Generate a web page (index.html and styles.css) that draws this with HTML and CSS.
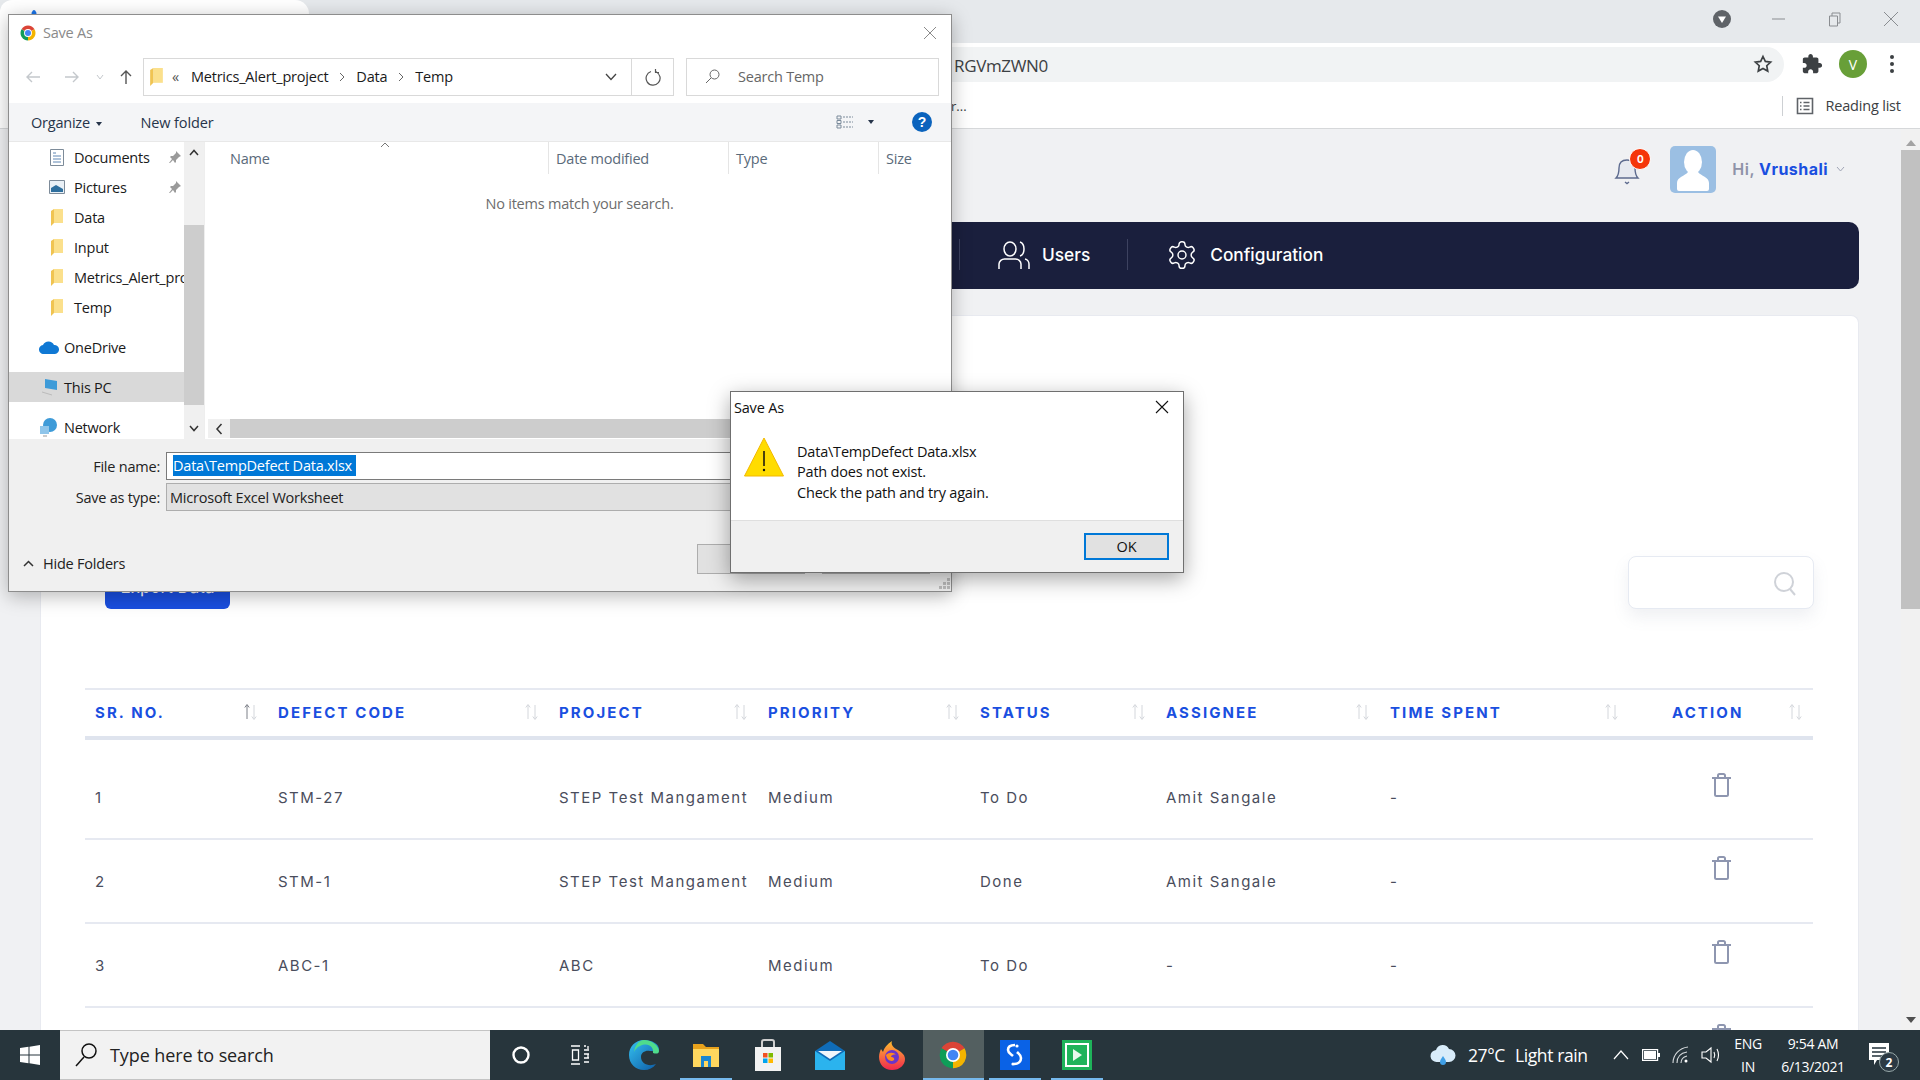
FILE: index.html
```html
<!DOCTYPE html>
<html lang="en">
<head>
<meta charset="utf-8">
<title>Defects - Save As</title>
<link rel="stylesheet" href="styles.css">
</head>
<body>
<svg class="defs" width="0" height="0" aria-hidden="true">
  <defs>
    <symbol id="chrome" viewBox="0 0 48 48">
      <path fill="#db4437" d="M24 24 6.700 14A20 20 0 0 1 41.300 14Z"/>
      <path fill="#f4b400" d="M24 24 41.300 14A20 20 0 0 1 24 44Z"/>
      <path fill="#0f9d58" d="M24 24V44A20 20 0 0 1 6.700 14Z"/>
      <circle cx="24" cy="24" r="10.500" fill="#fff"/>
      <circle cx="24" cy="24" r="8" fill="#4285f4"/>
    </symbol>
    <symbol id="folder" viewBox="0 0 12 17">
      <path fill="#fbe08c" d="M3 0h9v14H3Z"/>
      <path fill="#f0c452" d="M0 2 3 0v14l-3 3Z"/>
    </symbol>
    <symbol id="trash" viewBox="0 0 21 24">
      <path fill="none" stroke="#8e96b0" stroke-width="2" d="M1 5h19M4 5v16.500a1.500 1.500 0 0 0 1.500 1.500h10a1.500 1.500 0 0 0 1.500-1.500V5M7 5V2.500A1.500 1.500 0 0 1 8.500 1h4A1.500 1.500 0 0 1 14 2.500V5"/>
    </symbol>
    <symbol id="sort" viewBox="0 0 16 18">
      <path fill="none" stroke="#d4d7dc" stroke-width="1" d="M4 16V2M1.800 4.500 4 1.500 6.200 4.500M11 2v14M8.800 13.500 11 16.500 13.200 13.500"/>
    </symbol>
    <symbol id="sort-first" viewBox="0 0 16 18">
      <path fill="none" stroke="#7d8088" stroke-width="1" d="M4 16V2M1.800 4.500 4 1.500 6.200 4.500"/>
      <path fill="none" stroke="#d4d7dc" stroke-width="1" d="M11 2v14M8.800 13.500 11 16.500 13.200 13.500"/>
    </symbol>
  </defs>
</svg>

<div class="screen">
  <div class="browser">
    <div class="tabstrip">
      <div class="tab"><span class="tab-mark"></span></div>
      <div class="win-controls">
        <svg class="ctl-profile" width="18" height="18" viewBox="0 0 18 18"><circle cx="9" cy="9" r="9" fill="#5f6368"/><path d="M5 6.500h8L9 13Z" fill="#fff"/></svg>
        <svg class="ctl" width="16" height="16" viewBox="0 0 16 16"><path d="M1 8h13" stroke="#8a8d91" fill="none"/></svg>
        <svg class="ctl" width="16" height="16" viewBox="0 0 16 16"><path d="M2.500 5h8v10h-8ZM5 5V2h8v10h-2.500" stroke="#8a8d91" fill="none"/></svg>
        <svg class="ctl" width="16" height="16" viewBox="0 0 16 16"><path d="M1 1l14 14M15 1 1 15" stroke="#8a8d91" fill="none"/></svg>
      </div>
    </div>
    <div class="toolbar">
      <div class="omnibox">
        <span class="url">RGVmZWN0</span>
        <svg class="star" width="20" height="20" viewBox="0 0 24 24"><path fill="none" stroke="#3c4043" stroke-width="2" d="m12 3 2.800 5.900 6.400.8-4.700 4.400 1.200 6.400L12 17.400l-5.700 3.100 1.200-6.400-4.700-4.400 6.400-.8Z"/></svg>
      </div>
      <svg class="puzzle" width="22" height="22" viewBox="0 0 24 24"><path fill="#3c4043" d="M20.500 11H19V7c0-1.100-.9-2-2-2h-4V3.500C13 2.120 11.880 1 10.500 1S8 2.120 8 3.500V5H4c-1.100 0-1.990.9-1.990 2v3.800H3.500c1.490 0 2.700 1.210 2.700 2.700s-1.210 2.700-2.700 2.700H2V20c0 1.100.9 2 2 2h3.800v-1.500c0-1.490 1.210-2.700 2.700-2.700 1.490 0 2.700 1.210 2.700 2.700V22H17c1.100 0 2-.9 2-2v-4h1.500c1.380 0 2.500-1.120 2.500-2.500S21.880 11 20.500 11z"/></svg>
      <span class="account">V</span>
      <span class="kebab"><i></i><i></i><i></i></span>
    </div>
    <div class="bookmarks">
      <span class="bm-cut">r...</span>
      <span class="bm-sep"></span>
      <svg class="bm-icon" width="18" height="18" viewBox="0 0 18 18"><path fill="none" stroke="#5f6368" stroke-width="1.600" d="M1.500 1.500h15v15h-15ZM7.500 5.500h6M7.500 9h6M7.500 12.500h6M4 5.500h1.500M4 9h1.500M4 12.500h1.500"/></svg>
      <span class="bm-text">Reading list</span>
    </div>
    <div class="viewport">
      <main class="page">
        <header class="topbar">
          <div class="bell">
            <svg width="26" height="30" viewBox="0 0 26 30"><path fill="#e6e9f0" stroke="#5d6b8f" stroke-width="1.400" d="M2 23c3-3 3-6 3-10 0-5 3-8 8-8s8 3 8 8c0 4 0 7 3 10Z"/><path fill="none" stroke="#5d6b8f" stroke-width="1.400" d="M11 27l2 1.500 2-1.500"/></svg>
            <span class="badge">0</span>
          </div>
          <div class="avatar">
            <svg width="36" height="42" viewBox="0 0 36 42"><ellipse cx="18" cy="13" rx="9" ry="12" fill="#fff"/><path fill="#fff" d="M2 40v-6c0-6 8-7 11-11h10c3 4 11 5 11 11v6a2 2 0 0 1-2 2H4a2 2 0 0 1-2-2Z"/></svg>
          </div>
          <span class="hi">Hi, <b>Vrushali</b></span>
          <svg class="hi-caret" width="9" height="6" viewBox="0 0 9 6"><path d="m1 1 3.500 4L8 1" fill="none" stroke="#a0a5b5"/></svg>
        </header>
        <nav class="mainnav">
          <span class="nav-sep first"></span>
          <a class="nav-item">
            <svg width="32" height="30" viewBox="0 0 32 30"><g fill="none" stroke="#fff" stroke-width="1.500"><ellipse cx="12" cy="9" rx="6" ry="7"/><path d="M1 29v-5c0-3 3-5 5.500-5h11c2.500 0 5.500 2 5.500 5v5M22 2c3 1 4 4 4 7s-1 6-4 7M27 19c2.500.5 4 3 4 5v5"/></g></svg>
            Users
          </a>
          <span class="nav-sep"></span>
          <a class="nav-item">
            <svg width="32" height="32" viewBox="0 0 24 24"><g fill="none" stroke="#fff" stroke-width="1.100"><path d="M12.220 2h-.44a2 2 0 0 0-2 2v.18a2 2 0 0 1-1 1.730l-.43.25a2 2 0 0 1-2 0l-.15-.08a2 2 0 0 0-2.730.73l-.22.38a2 2 0 0 0 .73 2.730l.15.1a2 2 0 0 1 1 1.720v.51a2 2 0 0 1-1 1.740l-.15.09a2 2 0 0 0-.73 2.730l.22.38a2 2 0 0 0 2.730.73l.15-.08a2 2 0 0 1 2 0l.43.25a2 2 0 0 1 1 1.730V20a2 2 0 0 0 2 2h.44a2 2 0 0 0 2-2v-.18a2 2 0 0 1 1-1.730l.43-.25a2 2 0 0 1 2 0l.15.08a2 2 0 0 0 2.730-.73l.22-.39a2 2 0 0 0-.73-2.730l-.15-.08a2 2 0 0 1-1-1.740v-.5a2 2 0 0 1 1-1.740l.15-.09a2 2 0 0 0 .73-2.730l-.22-.38a2 2 0 0 0-2.730-.73l-.15.08a2 2 0 0 1-2 0l-.43-.25a2 2 0 0 1-1-1.730V4a2 2 0 0 0-2-2z"/><circle cx="12" cy="12" r="3"/></g></svg>
            Configuration
          </a>
        </nav>
        <section class="card">
          <div class="card-actions">
            <button class="export">Export Data</button>
            <div class="searchbox">
              <svg width="24" height="26" viewBox="0 0 24 26"><g fill="none" stroke="#cfd2d8" stroke-width="2"><circle cx="11" cy="12" r="9"/><path d="m17 19 5 6"/></g></svg>
            </div>
          </div>
          <table class="grid">
            <colgroup><col class="c1"><col class="c2"><col class="c3"><col class="c4"><col class="c5"><col class="c6"><col class="c7"><col class="c8"></colgroup>
            <thead>
              <tr>
                <th><div class="th"><span>SR. NO.</span><svg width="16" height="18"><use href="#sort-first"/></svg></div></th>
                <th><div class="th"><span>DEFECT CODE</span><svg width="16" height="18"><use href="#sort"/></svg></div></th>
                <th><div class="th"><span>PROJECT</span><svg width="16" height="18"><use href="#sort"/></svg></div></th>
                <th><div class="th"><span>PRIORITY</span><svg width="16" height="18"><use href="#sort"/></svg></div></th>
                <th><div class="th"><span>STATUS</span><svg width="16" height="18"><use href="#sort"/></svg></div></th>
                <th><div class="th"><span>ASSIGNEE</span><svg width="16" height="18"><use href="#sort"/></svg></div></th>
                <th><div class="th"><span>TIME SPENT</span><svg width="16" height="18"><use href="#sort"/></svg></div></th>
                <th class="act-h"><div class="th"><span>ACTION</span><svg width="16" height="18"><use href="#sort"/></svg></div></th>
              </tr>
            </thead>
            <tbody>
              <tr><td>1</td><td>STM-27</td><td>STEP Test Mangament</td><td>Medium</td><td>To Do</td><td>Amit Sangale</td><td>-</td><td class="act"><svg width="21" height="24"><use href="#trash"/></svg></td></tr>
              <tr><td>2</td><td>STM-1</td><td>STEP Test Mangament</td><td>Medium</td><td>Done</td><td>Amit Sangale</td><td>-</td><td class="act"><svg width="21" height="24"><use href="#trash"/></svg></td></tr>
              <tr><td>3</td><td>ABC-1</td><td>ABC</td><td>Medium</td><td>To Do</td><td>-</td><td>-</td><td class="act"><svg width="21" height="24"><use href="#trash"/></svg></td></tr>
              <tr><td></td><td></td><td></td><td></td><td></td><td></td><td></td><td class="act"><svg width="21" height="24"><use href="#trash"/></svg></td></tr>
            </tbody>
          </table>
        </section>
      </main>
      <div class="vscroll">
        <span class="arrow up"></span>
        <span class="vthumb"></span>
        <span class="vspace"></span>
        <span class="arrow down"></span>
      </div>
    </div>
  </div>

  <footer class="taskbar">
    <div class="start">
      <svg width="20" height="20" viewBox="0 0 20 20"><path fill="#fff" d="M0 3 8.500 1.800v7.700H0ZM9.500 1.700 20 0v9.500H9.500ZM0 10.500h8.500v7.700L0 17ZM9.500 10.500H20V20L9.500 18.300Z"/></svg>
    </div>
    <div class="tb-search">
      <svg width="24" height="26" viewBox="0 0 24 26"><g fill="none" stroke="#111" stroke-width="1.500"><circle cx="15" cy="9" r="7"/><path d="M10 15 2 24"/></g></svg>
      <span>Type here to search</span>
    </div>
    <div class="tb-apps">
      <span class="app"><svg width="18" height="18" viewBox="0 0 18 18"><circle cx="9" cy="9" r="7.500" fill="none" stroke="#fff" stroke-width="2.400"/></svg></span>
      <span class="app"><svg class="taskview" width="20" height="20" viewBox="0 0 20 20"><path fill="none" stroke="#fff" stroke-width="1.300" d="M1 1h9M1 19h9M2.500 5h6v10h-6ZM14 1h2M14 5h5M14 9h5M14 13h5M14 17h5M18 1v3M18 9v4"/></svg></span>
      <span class="app"><svg width="32" height="32" viewBox="0 0 32 32"><defs><linearGradient id="eg" x1="0" y1="0" x2="1" y2="1"><stop offset="0" stop-color="#35c1f1"/><stop offset="1" stop-color="#0c59a4"/></linearGradient></defs><path fill="url(#eg)" d="M16 1C7 1 1 8 1 16c0 9 7 15 15 15 5 0 9-2 12-6-7 3-15 0-15-7 0-5 5-7 9-6 4 0 9 2 9-2C31 5 24 1 16 1Z"/><path fill="#4fdc8c" d="M16 1c8 0 15 6 15 11 0 3-3 3-6 2 1-6-5-11-13-7-3 1-5 4-6 6C7 6 11 1 16 1Z"/></svg></span>
      <span class="app on"><svg width="28" height="28" viewBox="0 0 28 28"><path fill="#e8a21c" d="M1 3h10l3 3h13v5H1Z"/><path fill="#ffd75e" d="M1 8h26v18H1Z"/><path fill="#1a86d0" d="M9 15h10v11h-3v-6h-4v6H9Z"/></svg></span>
      <span class="app"><svg width="30" height="32" viewBox="0 0 30 32"><path fill="none" stroke="#cfcfcf" stroke-width="2" d="M9 9V3a2 2 0 0 1 2-2h8a2 2 0 0 1 2 2v6"/><path fill="#f2f2f2" d="M2 8h26v24H2Z"/><path fill="#f25022" d="M10 14h4.500v4.500H10Z"/><path fill="#7fba00" d="M15.500 14H20v4.500h-4.500Z"/><path fill="#00a4ef" d="M10 19.500h4.500V24H10Z"/><path fill="#ffb900" d="M15.500 19.500H20V24h-4.500Z"/></svg></span>
      <span class="app"><svg width="30" height="30" viewBox="0 0 30 30"><path fill="#0f6cb8" d="M15 1 30 11v19H0V11Z"/><path fill="#2bb3ee" d="M0 11l15 10 15-10v19H0Z"/><path fill="#f0f6fb" d="M3 11h24L15 19Z"/></svg></span>
      <span class="app"><svg width="28" height="30" viewBox="0 0 28 30"><defs><linearGradient id="fg" x1="0" y1="0" x2="0" y2="1"><stop offset="0" stop-color="#ffbd2e"/><stop offset="1" stop-color="#f1274e"/></linearGradient></defs><path fill="url(#fg)" d="M14 30C6 30 1 24 1 17c0-3 1-6 2-8l2 3c1-4 4-8 9-11-1 3 0 5 4 8 4 2 9 5 9 10 0 6-5 11-13 11Z"/><circle cx="14" cy="17" r="7" fill="#6b35c9"/><path fill="#ff8a1e" d="M8 15c3-3 8-3 10 0-2-1-5 0-5 2 2 0 4 1 3 3-2 2-7 1-8-5Z"/></svg></span>
      <span class="app on active"><svg width="32" height="32"><use href="#chrome"/></svg></span>
      <span class="app on"><svg width="30" height="30" viewBox="0 0 30 30"><path fill="#0a62e6" d="M0 0h30v30H0Z"/><path fill="none" stroke="#fff" stroke-width="2.600" d="M15 5c-5 0-7 2-7 5 0 3 3 4 5 6M17 12c2 2 4 3 4 6s-2 6-7 6"/><circle cx="13" cy="24" r="1.600" fill="#fff"/><circle cx="17" cy="6" r="1.600" fill="#fff"/></svg></span>
      <span class="app on"><svg width="30" height="30" viewBox="0 0 30 30"><path fill="#1eb35a" d="M0 0h30v30H0Z"/><path fill="#fff" d="M3 3h24v24H3Z"/><path fill="#1eb35a" d="M5 5h20v20H5Z"/><path fill="#e8f8ee" d="M11 9l9 6-9 6Z"/></svg></span>
    </div>
    <div class="tray">
      <svg class="t-weather" width="26" height="26" viewBox="0 0 26 26"><path fill="#d8ecfa" d="M7 20a6 6 0 0 1-1-12 7 7 0 0 1 13-1 6.500 6.500 0 0 1 0 13Z"/><path fill="#3f9fe6" d="M13 14c2 3 3 4 3 6a3 3 0 0 1-6 0c0-2 1-3 3-6Z"/></svg>
      <span class="t-temp">27°C</span>
      <span class="t-cond">Light rain</span>
      <span class="t-ico"><svg width="16" height="10" viewBox="0 0 16 10"><path fill="none" stroke="#fff" stroke-width="1.200" d="m1 9 7-8 7 8"/></svg></span>
      <span class="t-ico"><svg width="18" height="12" viewBox="0 0 18 12"><path fill="none" stroke="#fff" stroke-width="1.200" d="M.6.600h15v10.800H.6Z"/><path fill="#fff" d="M2 2h12v8H2ZM16 4h2v4h-2Z"/></svg></span>
      <span class="t-ico"><svg width="18" height="18" viewBox="0 0 18 18"><path fill="none" stroke="#d5d9dc" stroke-width="1.100" d="M1 17C1 9 7 2 16 1M5 17c0-6 4-10 10-11M9 17c0-4 2-6 6-7"/><circle cx="14" cy="15" r="1.500" fill="#fff"/></svg></span>
      <span class="t-ico"><svg width="20" height="18" viewBox="0 0 20 18"><path fill="none" stroke="#fff" stroke-width="1.100" d="M1 6h4l5-4v14l-5-4H1ZM13 6c1 2 1 4 0 6M16 3c2 4 2 8 0 12"/></svg></span>
      <span class="t-lang"><span>ENG</span><span>IN</span></span>
      <span class="t-clock"><span>9:54 AM</span><span>6/13/2021</span></span>
      <span class="t-note">
        <svg width="20" height="26" viewBox="0 0 20 26"><path fill="#fff" d="M0 1h20v17H8l-3 5v-5H0Z"/><path stroke="#22303a" stroke-width="1.300" d="M3 6h14M3 10h14M3 14h10"/></svg>
        <span class="t-count">2</span>
      </span>
    </div>
  </footer>

  <section class="dlg-save">
    <div class="dlg-title">
      <svg width="18" height="18"><use href="#chrome"/></svg>
      <span>Save As</span>
      <svg class="dlg-x" width="14" height="14" viewBox="0 0 14 14"><path d="M1 1l12 12M13 1 1 13" stroke="#8a8a8a" fill="none"/></svg>
    </div>
    <div class="dlg-nav">
      <svg class="n-ico" width="16" height="14" viewBox="0 0 16 14"><path d="M15 7H2M7 2 2 7l5 5" fill="none" stroke="#c4c8cc" stroke-width="1.400"/></svg>
      <svg class="n-ico fwd" width="16" height="14" viewBox="0 0 16 14"><path d="M1 7h13M9 2l5 5-5 5" fill="none" stroke="#c4c8cc" stroke-width="1.400"/></svg>
      <svg class="n-ico dn" width="8" height="6" viewBox="0 0 8 6"><path d="m1 1 3 4 3-4" fill="none" stroke="#c4c8cc"/></svg>
      <svg class="n-ico up" width="14" height="16" viewBox="0 0 14 16"><path d="M7 15V2M2 7l5-5 5 5" fill="none" stroke="#555" stroke-width="1.400"/></svg>
      <div class="addr">
        <svg width="13" height="18"><use href="#folder"/></svg>
        <span class="a-up">«</span>
        <span>Metrics_Alert_project</span><svg class="crumb" width="6" height="10" viewBox="0 0 6 10"><path d="m1 1 4 4-4 4" fill="none" stroke="#666"/></svg>
        <span>Data</span><svg class="crumb" width="6" height="10" viewBox="0 0 6 10"><path d="m1 1 4 4-4 4" fill="none" stroke="#666"/></svg>
        <span>Temp</span>
        <svg class="a-dd" width="12" height="8" viewBox="0 0 12 8"><path d="m1 1 5 5.500L11 1" fill="none" stroke="#444" stroke-width="1.300"/></svg>
        <span class="a-ref"><svg width="16" height="18" viewBox="0 0 16 18"><path d="M6 3.500A7 7 0 1 0 11 3.800M10.500 1v3.500H14" fill="none" stroke="#555" stroke-width="1.200"/></svg></span>
      </div>
      <div class="dsearch">
        <svg width="15" height="15" viewBox="0 0 15 15"><circle cx="9.500" cy="5.500" r="4.500" fill="none" stroke="#666"/><path d="M6 9l-5 5" stroke="#666" fill="none"/></svg>
        <span>Search Temp</span>
      </div>
    </div>
    <div class="dlg-tools">
      <span class="tool">Organize <i class="caret"></i></span>
      <span class="tool nf">New folder</span>
      <svg class="views" width="18" height="14" viewBox="0 0 18 14"><path d="M1 1h4v3H1ZM1 5.500h4v3H1ZM1 10h4v3H1Z" fill="none" stroke="#7a8a9a"/><path d="M7 2h10M7 7h10M7 12h10" stroke="#7a8a9a" stroke-dasharray="2 1" fill="none"/></svg>
      <i class="caret views-c"></i>
      <span class="help">?</span>
    </div>
    <div class="dlg-body">
      <div class="tree">
        <div class="t-item q"><svg width="14" height="17" viewBox="0 0 14 17"><path d="M.5.500h13v16H.5Z" fill="#fff" stroke="#7d8b99"/><path d="M3 4h3M3 7h8M3 10h8M3 13h8" stroke="#5f86b3"/></svg><span>Documents</span><svg class="pin" width="12" height="13" viewBox="0 0 12 13"><path fill="#9a9a9a" d="M7 0l5 5-2 1-3 3 0 2-1 1-2-3-3 3-1 0 3-4-2-2 1-1 2 0 3-3Z"/></svg></div>
        <div class="t-item q"><svg width="16" height="14" viewBox="0 0 16 14"><path d="M.5.500h15v13H.5Z" fill="#e9f0f6" stroke="#7d8b99"/><path d="M2 8l5-3 7 4v3H2Z" fill="#2e6f9e"/></svg><span>Pictures</span><svg class="pin" width="12" height="13" viewBox="0 0 12 13"><path fill="#9a9a9a" d="M7 0l5 5-2 1-3 3 0 2-1 1-2-3-3 3-1 0 3-4-2-2 1-1 2 0 3-3Z"/></svg></div>
        <div class="t-item q"><svg width="14" height="17"><use href="#folder"/></svg><span>Data</span></div>
        <div class="t-item q"><svg width="14" height="17"><use href="#folder"/></svg><span>Input</span></div>
        <div class="t-item q"><svg width="14" height="17"><use href="#folder"/></svg><span>Metrics_Alert_project</span></div>
        <div class="t-item q"><svg width="14" height="17"><use href="#folder"/></svg><span>Temp</span></div>
        <div class="t-item r gap"><svg width="20" height="14" viewBox="0 0 20 14"><path fill="#0f78d4" d="M5 14a4.500 4.500 0 0 1-1-9 6 6 0 0 1 11 0 4.500 4.500 0 0 1 1 9Z"/></svg><span>OneDrive</span></div>
        <div class="t-item r sel gap"><svg width="20" height="18" viewBox="0 0 20 18"><path fill="#3e9bd8" d="M6 1l12 2v9l-12-2Z"/><path d="M3 14l10 3" stroke="#bbb" fill="none"/></svg><span>This PC</span></div>
        <div class="t-item r gap"><svg width="20" height="20" viewBox="0 0 20 20"><circle cx="11" cy="8" r="7" fill="#3e9bd8"/><path d="M1 9h9v8H1Z" fill="#8fc5ea"/><path d="M4 19h4" stroke="#999"/></svg><span>Network</span></div>
      </div>
      <div class="tree-scroll">
        <svg class="ts-a" width="10" height="7" viewBox="0 0 10 7"><path d="m1 6 4-4.500L9 6" fill="none" stroke="#333" stroke-width="1.500"/></svg>
        <span class="ts-thumb"></span>
        <svg class="ts-a" width="10" height="7" viewBox="0 0 10 7"><path d="m1 1 4 4.500L9 1" fill="none" stroke="#333" stroke-width="1.500"/></svg>
      </div>
      <div class="list">
        <div class="l-head">
          <span class="h-name">Name<svg class="h-sort" width="10" height="6" viewBox="0 0 10 6"><path d="m1 5 4-4 4 4" fill="none" stroke="#777"/></svg></span>
          <span>Date modified</span><span>Type</span><span>Size</span>
        </div>
        <div class="l-empty">No items match your search.</div>
        <div class="hscroll">
          <svg width="8" height="12" viewBox="0 0 8 12"><path d="M6.500 1 2 6l4.500 5" fill="none" stroke="#333" stroke-width="1.500"/></svg>
          <span class="hthumb"></span>
        </div>
      </div>
    </div>
    <div class="dlg-panel">
      <div class="f-row">
        <label>File name:</label>
        <div class="f-input"><span class="selected">Data\TempDefect Data.xlsx</span></div>
      </div>
      <div class="f-row tight">
        <label>Save as type:</label>
        <div class="f-select">Microsoft Excel Worksheet</div>
      </div>
      <div class="p-foot">
        <span class="hide"><svg width="11" height="7" viewBox="0 0 11 7"><path d="m1 6 4.500-4.500L10 6" fill="none" stroke="#333" stroke-width="1.500"/></svg>Hide Folders</span>
        <span class="btn">Save</span>
        <span class="btn">Cancel</span>
      </div>
      <svg class="grip" width="12" height="12" viewBox="0 0 12 12"><path fill="#bdbdbd" d="M9 0h3v3H9ZM5 4h3v3H5ZM9 4h3v3H9ZM1 8h3v3H1ZM5 8h3v3H5ZM9 8h3v3H9Z"/></svg>
    </div>
  </section>

  <section class="dlg-alert">
    <div class="al-title">
      <span>Save As</span>
      <svg class="al-x" width="14" height="14" viewBox="0 0 14 14"><path d="M1 1l12 12M13 1 1 13" stroke="#111" fill="none" stroke-width="1.100"/></svg>
    </div>
    <div class="al-body">
      <svg width="40" height="40" viewBox="0 0 40 40"><path fill="#ffdc00" stroke="#f2b800" d="M20 1 39.500 39H.5Z"/><path d="M20 14v15" stroke="#111" stroke-width="1.500"/><circle cx="20" cy="33" r="1.200" fill="#111"/></svg>
      <p>Data\TempDefect Data.xlsx<br>Path does not exist.<br>Check the path and try again.</p>
    </div>
    <div class="al-foot"><span class="ok">OK</span></div>
  </section>
</div>
</body>
</html>
```

FILE: styles.css
```css
* { box-sizing: border-box; }
html, body { margin: 0; padding: 0; height: 100%; overflow: hidden; }
body { font-family: "Liberation Sans", Arial, sans-serif; background: #f0f1f3; }
.defs { position: absolute; }
.screen { position: relative; width: 1920px; height: 1080px; display: flex; flex-direction: column; overflow: hidden; }

/* browser */
.browser { flex: 1; min-height: 0; display: flex; flex-direction: column; }
.tabstrip { height: 43px; background: #e6e9ec; display: flex; flex: none; }
.tab { width: 309px; background: #fff; border-radius: 12px 14px 0 0; position: relative; }
.tab-mark { display: block; width: 6px; height: 16px; margin: 10px 0 0 31px; background: #1a73e8; border-radius: 50%; }
.win-controls { margin-left: auto; display: flex; align-items: center; height: 38px; padding-right: 21px; }
.ctl { margin-left: 40px; }
.toolbar { height: 42px; flex: none; background: #fff; display: flex; align-items: center; }
.omnibox { margin-left: 140px; width: 1644px; height: 35px; background: #f1f3f4; border-radius: 18px; display: flex; align-items: center; padding: 0 11px 0 814px; }
.url { font: 17px "Open Sans", sans-serif; color: #3c4043; letter-spacing: -0.35px; padding-top: 2px; }
.star { margin-left: auto; }
.puzzle { margin-left: 17px; }
.account { width: 28px; height: 28px; margin-left: 16px; border-radius: 50%; background: #689f38; color: #fff; font: 14px "Open Sans", sans-serif; display: flex; align-items: center; justify-content: center; }
.kebab { margin-left: 23px; display: flex; flex-direction: column; gap: 3px; }
.kebab i { display: block; width: 4px; height: 4px; border-radius: 50%; background: #3c4043; }
.bookmarks { height: 44px; flex: none; background: #fff; border-bottom: 1px solid #d6d8da; display: flex; align-items: center; padding: 0 0 2px 951px; }
.bm-cut { font: 13px "Open Sans", sans-serif; color: #3c4043; }
.bm-sep { width: 1px; height: 20px; background: #cdd0d3; margin-left: 815px; }
.bm-icon { margin-left: 13px; }
.bm-text { margin-left: 12px; font: 14.500px "Open Sans", sans-serif; color: #3c4043; letter-spacing: -0.2px; }
.viewport { flex: 1; min-height: 0; display: flex; background: #f0f1f3; }
.page { flex: 1; min-width: 0; padding: 0 42px 0 40px; overflow: hidden; display: flex; flex-direction: column; }
.vscroll { width: 19px; flex: none; background: #f1f1f1; display: flex; flex-direction: column; align-items: center; }
.arrow { flex: none; width: 0; height: 0; border-left: 5px solid transparent; border-right: 5px solid transparent; }
.arrow.up { margin: 11px 0 4px; border-bottom: 6px solid #a3a3a3; }
.arrow.down { margin: 0 0 7px; border-top: 6px solid #505050; }
.vthumb { width: 100%; height: 459px; background: #c1c1c1; flex: none; }
.vspace { flex: 1; }

.topbar { height: 93px; flex: none; display: flex; align-items: flex-start; justify-content: flex-end; padding: 17px 14px 0 0; }
.bell { position: relative; width: 26px; height: 30px; margin: 9px 30px 0 0; }
.badge { position: absolute; top: -7px; right: -11px; width: 22px; height: 22px; border-radius: 50%; background: #f5360a; border: 1px solid #fff; color: #fff; font: bold 10px "Inter", sans-serif; display: flex; align-items: center; justify-content: center; }
.avatar { width: 46px; height: 47px; background: #9bbfe3; border-radius: 5px; display: flex; justify-content: center; align-items: flex-end; padding-bottom: 2px; }
.hi { margin: 13px 0 0 16px; font: 600 16px "Inter", sans-serif; color: #8f93a8; letter-spacing: 0.45px; }
.hi b { font-weight: 700; color: #1a4fe0; }
.hi-caret { margin: 20px 0 0 8px; }

.mainnav { height: 67px; flex: none; background: #1a1f3d; border-radius: 10px; display: flex; align-items: center; color: #fff; padding-bottom: 2px; }
.nav-sep { width: 1px; height: 31px; background: #3d4260; flex: none; }
.nav-sep.first { margin-left: 919px; }
.nav-item { display: flex; align-items: center; gap: 12px; padding: 0 37px 0 38px; font: 500 17.300px "Inter", sans-serif; color: #fff; }

.card { flex: 1; margin-top: 26px; min-height: 0; background: #fff; border: 1px solid #e8eaf0; border-bottom: 0; border-radius: 8px 8px 0 0; padding: 0 44px; overflow: hidden; }
.card-actions { height: 293px; display: flex; align-items: flex-end; justify-content: space-between; padding: 0 0 0 20px; }
.export { width: 125px; height: 44px; border: 0; border-radius: 6px; background: #1a4fe0; color: #fff; font: 17px "Inter", sans-serif; }
.searchbox { width: 186px; height: 53px; background: #fff; border: 1px solid #e6eaf2; border-radius: 8px; box-shadow: 0 8px 16px rgba(120, 130, 160, .12); display: flex; align-items: center; justify-content: flex-end; padding-right: 16px; }

.grid { margin-top: 79px; width: 1728px; table-layout: fixed; border-collapse: collapse; border-top: 2px solid #e6e9f1; }
.c1 { width: 183px; } .c2 { width: 281px; } .c3 { width: 209px; } .c4 { width: 212px; }
.c5 { width: 186px; } .c6 { width: 224px; } .c7 { width: 249px; } .c8 { width: 184px; }
.grid th { height: 49px; padding: 0 9px 2px 10px; border-bottom: 4px solid #dfe4ee; }
.th { display: flex; align-items: center; justify-content: space-between; font: 700 15px "Inter", sans-serif; letter-spacing: 2.100px; color: #1a4fe0; }
.grid th.act-h { padding-left: 43px; }
.grid td { height: 84px; padding: 0 10px; border-bottom: 2px solid #e6e9f1; font: 15px "Inter", sans-serif; letter-spacing: 1.500px; color: #4a4d5c; white-space: nowrap; }
.grid tbody tr:first-child td { height: 101px; padding-top: 17px; }
.grid td.act { padding: 0 0 26px 82px; }
.grid tbody tr:first-child td.act { padding: 17px 0 26px 82px; }
.act svg { display: block; }

/* taskbar */
.taskbar { height: 50px; flex: none; background: #27353c; display: flex; align-items: center; color: #fff; font-family: "Open Sans", sans-serif; }
.start { width: 60px; display: flex; justify-content: center; }
.tb-search { width: 430px; height: 50px; background: #f2f2f2; border-top: 1px solid #c4c4c4; border-bottom: 1px solid #c4c4c4; display: flex; align-items: center; padding-left: 14px; color: #222; font-size: 18px; letter-spacing: -0.1px; }
.tb-search span { margin-left: 12px; }
.tb-apps { display: flex; height: 50px; }
.app { width: 61.800px; height: 50px; display: flex; align-items: center; justify-content: center; position: relative; }
.app.on::after { content: ""; position: absolute; left: 5px; right: 5px; bottom: 0; height: 2px; background: #76b9ed; }
.app.active { background: #535f60; }
.app.active::after { left: 0; right: 0; }
.taskview { margin-left: -5px; }
.tray { margin-left: auto; width: 490px; height: 50px; display: flex; align-items: center; font-size: 16px; }
.t-weather { flex: none; }
.t-temp { margin-left: 12px; width: 47px; font-size: 17.500px; letter-spacing: -0.4px; }
.t-cond { width: 91px; font-size: 17.500px; letter-spacing: -0.4px; }
.t-ico { width: 30px; display: flex; justify-content: center; flex: none; }
.t-lang, .t-clock { display: flex; flex-direction: column; align-items: center; font-size: 14px; line-height: 23px; flex: none; letter-spacing: -0.3px; }
.t-lang { width: 40px; margin-left: 2px; }
.t-clock { width: 78px; margin-left: 6px; }
.t-note { position: relative; margin-left: 17px; display: block; width: 30px; height: 26px; }
.t-count { position: absolute; right: 0; bottom: -4px; width: 20px; height: 20px; border-radius: 50%; background: #2c3a44; border: 1px solid #9aa; display: flex; align-items: center; justify-content: center; font-size: 12px; font-weight: 700; }

/* Save As file dialog */
.dlg-save { position: absolute; left: 8px; top: 14px; width: 944px; height: 578px; background: #fff; border: 1px solid #8d8d8d; display: flex; flex-direction: column; box-shadow: 0 4px 18px rgba(0, 0, 0, .28); font-family: "Open Sans", sans-serif; font-size: 14.500px; color: #222; letter-spacing: -0.22px; }
.dlg-title { height: 35px; flex: none; display: flex; align-items: center; padding: 0 14px 0 10px; color: #8a8a8a; }
.dlg-title span { margin-left: 6px; }
.dlg-x { margin-left: auto; }
.dlg-nav { height: 53px; flex: none; display: flex; align-items: center; padding: 0 11px 0 16px; }
.n-ico { flex: none; }
.n-ico.fwd { margin-left: 23px; }
.n-ico.dn { margin-left: 16px; }
.n-ico.up { margin-left: 15px; }
.addr { width: 531px; height: 38px; margin-left: 10px; border: 1px solid #d9d9d9; display: flex; align-items: center; padding-left: 6px; color: #1a1a1a; }
.a-up { margin: 0 12px 0 9px; color: #555; }
.crumb { flex: none; margin: 0 11px; }
.a-dd { margin-left: auto; margin-right: 14px; }
.a-ref { width: 42px; height: 36px; border-left: 1px solid #d9d9d9; display: flex; align-items: center; justify-content: center; }
.dsearch { width: 253px; height: 38px; margin-left: 12px; border: 1px solid #d9d9d9; display: flex; align-items: center; padding-left: 18px; color: #666; }
.dsearch span { margin-left: 18px; }
.dlg-tools { height: 39px; flex: none; background: #f4f5f7; border-bottom: 1px solid #e8e8e8; display: flex; align-items: center; padding: 0 19px 0 22px; color: #26344a; }
.caret { display: inline-block; width: 0; height: 0; margin-left: 3px; vertical-align: middle; border-left: 3.500px solid transparent; border-right: 3.500px solid transparent; border-top: 4px solid #26344a; }
.tool.nf { margin-left: 38px; letter-spacing: -0.1px; }
.views { margin-left: auto; }
.views-c { margin-left: 14px; }
.help { width: 20px; height: 20px; margin-left: 38px; border-radius: 50%; background: #0b63bd; color: #fff; font: bold 14px "Liberation Sans", sans-serif; display: flex; align-items: center; justify-content: center; }
.dlg-body { height: 297px; flex: none; display: flex; }
.tree { width: 175px; flex: none; overflow: hidden; white-space: nowrap; }
.t-item { height: 30px; display: flex; align-items: center; position: relative; color: #1a1a1a; }
.t-item.q { padding-left: 40px; }
.t-item.q > svg:first-child { width: 16px; flex: none; }
.t-item.q > span { margin-left: 9px; }
.t-item.r { padding-left: 30px; }
.t-item.r > svg:first-child { flex: none; width: 20px; }
.t-item.r > span { margin-left: 5px; }
.t-item.gap { margin-top: 10px; }
.t-item.sel { background: #d9d9d9; }
.pin { position: absolute; right: 3px; }
.tree-scroll { width: 20px; flex: none; background: #f0f0f0; display: flex; flex-direction: column; align-items: center; }
.ts-a { flex: none; margin: 7px 0; }
.ts-thumb { flex: 1; width: 100%; background: #cdcdcd; margin: 62px 0 13px; }
.list { flex: 1; min-width: 0; border-left: 1px solid #eee; display: flex; flex-direction: column; }
.l-head { height: 32px; flex: none; display: grid; grid-template-columns: 344px 180px 150px 1fr; color: #5a6a7a; }
.l-head span { position: relative; display: flex; align-items: center; padding-left: 7px; border-right: 1px solid #e5e5e5; }
.l-head span:last-child { border-right: 0; }
.l-head .h-name { padding-left: 25px; }
.h-sort { position: absolute; top: 0; left: 175px; }
.l-empty { flex: 1; padding-top: 20px; text-align: center; color: #6d6d6d; width: 749px; }
.hscroll { height: 19px; margin: 0 0 1px 3px; flex: none; display: flex; align-items: center; background: #f0f0f0; }
.hscroll svg { margin: 0 7px 0 7px; flex: none; }
.hthumb { flex: 1; height: 19px; background: #cdcdcd; }
.dlg-panel { flex: 1; background: #f0f0f0; position: relative; padding-top: 13px; }
.f-row { height: 28px; display: flex; align-items: center; padding-right: 11px; }
.f-row.tight { margin-top: 3px; }
.f-row label { width: 151px; text-align: right; margin-right: 6px; flex: none; color: #222; }
.f-input { flex: 1; height: 28px; background: #fff; border: 1px solid #7a7a7a; padding: 1px 6px 3px; display: flex; align-items: center; }
.selected { background: #0078d7; color: #fff; height: 21px; line-height: 21px; width: 183px; overflow: hidden; white-space: nowrap; flex: none; }
.f-select { flex: 1; height: 28px; background: #e1e1e1; border: 1px solid #adadad; padding: 0 3px; display: flex; align-items: center; }
.p-foot { margin-top: 33px; height: 30px; display: flex; align-items: center; padding-right: 21px; }
.hide { display: flex; align-items: center; gap: 9px; margin: 8px auto 0 14px; }
.btn { width: 108px; height: 30px; margin-left: 17px; background: #e1e1e1; border: 1px solid #adadad; display: flex; align-items: center; justify-content: center; }
.grip { position: absolute; right: 1px; bottom: 1px; }

/* Alert */
.dlg-alert { position: absolute; left: 730px; top: 391px; width: 454px; height: 182px; background: #fff; border: 1px solid #6f6f6f; display: flex; flex-direction: column; box-shadow: 0 6px 20px rgba(0, 0, 0, .35); font-family: "Open Sans", sans-serif; font-size: 14.500px; color: #111; letter-spacing: -0.2px; }
.al-title { height: 31px; flex: none; display: flex; align-items: center; justify-content: space-between; padding: 0 14px 0 3px; }
.al-x { margin-bottom: 2px; }
.al-body { flex: 1; display: flex; padding: 14px 0 0 13px; }
.al-body p { margin: 5px 0 0 13px; line-height: 20.400px; }
.al-foot { height: 52px; flex: none; background: #f0f0f0; border-top: 1px solid #dfdfdf; display: flex; justify-content: flex-end; align-items: center; padding-right: 14px; }
.ok { width: 85px; height: 27px; background: #e1e1e1; border: 2px solid #0078d7; display: flex; align-items: center; justify-content: center; }
```
